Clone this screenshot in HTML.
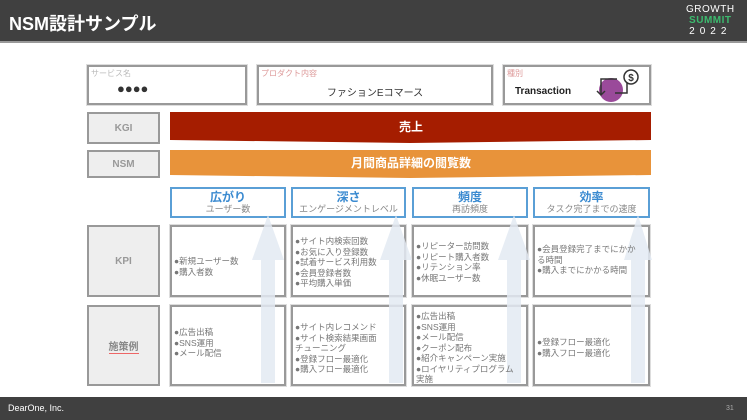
<!DOCTYPE html><html><head><meta charset="utf-8"><style>
*{margin:0;padding:0;box-sizing:border-box}
body{width:747px;height:420px;position:relative;background:#fff;font-family:"Liberation Sans","Noto Sans CJK JP",sans-serif;overflow:hidden}
.a{position:absolute}
.bx{position:absolute;border:2px solid #999;background:#fff;box-shadow:0 0 0 1px #ddd}
.lb{position:absolute;border:2px solid #999;background:#eee;color:#999;font-size:10px;font-weight:bold;display:flex;align-items:center;justify-content:center}
.cat{position:absolute;border:2px solid #5a9fd6;background:#fff;text-align:center;padding-top:1px}
.cat b{display:block;color:#3a8ad0;font-size:12px;line-height:14px}
.cat span{display:block;color:#888;font-size:9px;line-height:11px}
.t{position:absolute;font-size:8.5px;color:#777;line-height:10.5px;z-index:3}
.sm{font-size:8px;color:#bbb;position:absolute;left:2px;top:1px}
</style></head><body>
<div class="a" style="left:0;top:0;width:747px;height:43px;background:#404040;border-bottom:2px solid #999"></div>
<div class="a" style="left:9px;top:10px;color:#fff;font-size:18px;font-weight:bold">NSM設計サンプル</div>
<div class="a" style="left:686px;top:4px;color:#fff;font-size:10px;line-height:11px;text-align:center;letter-spacing:0.5px">GROWTH<br><span style="color:#3cba6e;font-weight:bold">SUMMIT</span><br><span style="letter-spacing:5px">2022</span></div>

<div class="bx" style="left:87px;top:65px;width:160px;height:40px"><div class="sm">サービス名</div><div class="a" style="left:28px;top:14px;font-size:13px;color:#333">●●●●</div></div>
<div class="bx" style="left:257px;top:65px;width:236px;height:40px"><div class="sm" style="color:#d99">プロダクト内容</div><div class="a" style="left:0;width:100%;text-align:center;top:17px;font-size:10px;color:#333">ファションEコマース</div></div>
<div class="bx" style="left:503px;top:65px;width:148px;height:40px"><div class="sm" style="color:#d99">種別</div><div class="a" style="left:10px;top:19px;font-size:10px;font-weight:bold;color:#222">Transaction</div>
<svg class="a" style="left:84px;top:0" width="60" height="36"><circle cx="22" cy="23" r="12" fill="#9a4a9a"/><path d="M38 16 V26 H26 M28 12 H12 V28 M8 24 L12 28 L16 24" fill="none" stroke="#333" stroke-width="1.5"/><circle cx="42" cy="10" r="7" fill="#fff" stroke="#333" stroke-width="1.5"/><text x="42" y="14" font-size="10" text-anchor="middle" font-family="Liberation Sans" font-weight="bold" fill="#333">$</text></svg></div>

<div class="lb" style="left:87px;top:112px;width:73px;height:32px">KGI</div>
<svg class="a" style="left:170px;top:112px" width="482" height="32"><polygon points="0,0 481,0 481,28 240,31 0,28" fill="#a51d00"/><text x="241" y="19" fill="#fff" font-size="12" font-weight="bold" text-anchor="middle" font-family="Noto Sans CJK JP">売上</text></svg>
<div class="lb" style="left:87px;top:150px;width:73px;height:28px">NSM</div>
<svg class="a" style="left:170px;top:150px" width="482" height="30"><polygon points="0,0 481,0 481,25 240,28 0,25" fill="#e8933a"/><text x="241" y="17" fill="#fff" font-size="12" font-weight="bold" text-anchor="middle" font-family="Noto Sans CJK JP">月間商品詳細の閲覧数</text></svg>

<div class="cat" style="left:170px;top:187px;width:116px;height:31px"><b>広がり</b><span>ユーザー数</span></div>
<div class="cat" style="left:291px;top:187px;width:115px;height:31px"><b>深さ</b><span>エンゲージメントレベル</span></div>
<div class="cat" style="left:412px;top:187px;width:116px;height:31px"><b>頻度</b><span>再訪頻度</span></div>
<div class="cat" style="left:533px;top:187px;width:117px;height:31px"><b>効率</b><span>タスク完了までの速度</span></div>

<div class="lb" style="left:87px;top:225px;width:73px;height:72px">KPI</div>
<div class="lb" style="left:87px;top:305px;width:73px;height:81px"><span style="border-bottom:1px solid #e66;color:#888">施策例</span></div>
<div class="bx" style="left:170px;top:225px;width:116px;height:72px"></div>
<div class="bx" style="left:291px;top:225px;width:115px;height:72px"></div>
<div class="bx" style="left:412px;top:225px;width:116px;height:72px"></div>
<div class="bx" style="left:533px;top:225px;width:117px;height:72px"></div>
<div class="bx" style="left:170px;top:305px;width:116px;height:81px"></div>
<div class="bx" style="left:291px;top:305px;width:115px;height:81px"></div>
<div class="bx" style="left:412px;top:305px;width:116px;height:81px"></div>
<div class="bx" style="left:533px;top:305px;width:117px;height:81px"></div>

<svg class="a" style="left:0;top:0;z-index:2" width="747" height="420">
<g fill="#e3eaf3" opacity="0.85">
<polygon points="268,215 284,260 275,260 275,383 261,383 261,260 252,260"/>
<polygon points="396,215 412,260 403,260 403,383 389,383 389,260 380,260"/>
<polygon points="514,215 530,260 521,260 521,383 507,383 507,260 498,260"/>
<polygon points="638,215 652,260 645,260 645,383 631,383 631,260 624,260"/>
</g></svg>

<div class="t" style="left:174px;top:256px">●新規ユーザー数<br>●購入者数</div>
<div class="t" style="left:295px;top:236px">●サイト内検索回数<br>●お気に入り登録数<br>●試着サービス利用数<br>●会員登録者数<br>●平均購入単価</div>
<div class="t" style="left:416px;top:241px">●リピーター訪問数<br>●リピート購入者数<br>●リテンション率<br>●休眠ユーザー数</div>
<div class="t" style="left:537px;top:244px">●会員登録完了までにかか<br>る時間<br>●購入までにかかる時間</div>
<div class="t" style="left:174px;top:327px">●広告出稿<br>●SNS運用<br>●メール配信</div>
<div class="t" style="left:295px;top:322px">●サイト内レコメンド<br>●サイト検索結果画面<br>チューニング<br>●登録フロー最適化<br>●購入フロー最適化</div>
<div class="t" style="left:416px;top:311px">●広告出稿<br>●SNS運用<br>●メール配信<br>●クーポン配布<br>●紹介キャンペーン実施<br>●ロイヤリティプログラム<br>実施</div>
<div class="t" style="left:537px;top:337px">●登録フロー最適化<br>●購入フロー最適化</div>

<div class="a" style="left:0;top:397px;width:747px;height:23px;background:#404040"></div>
<div class="a" style="left:8px;top:403px;color:#fff;font-size:9px">DearOne, Inc.</div>
<div class="a" style="left:726px;top:405px;color:#aaa;font-size:7px">31</div>
</body></html>
